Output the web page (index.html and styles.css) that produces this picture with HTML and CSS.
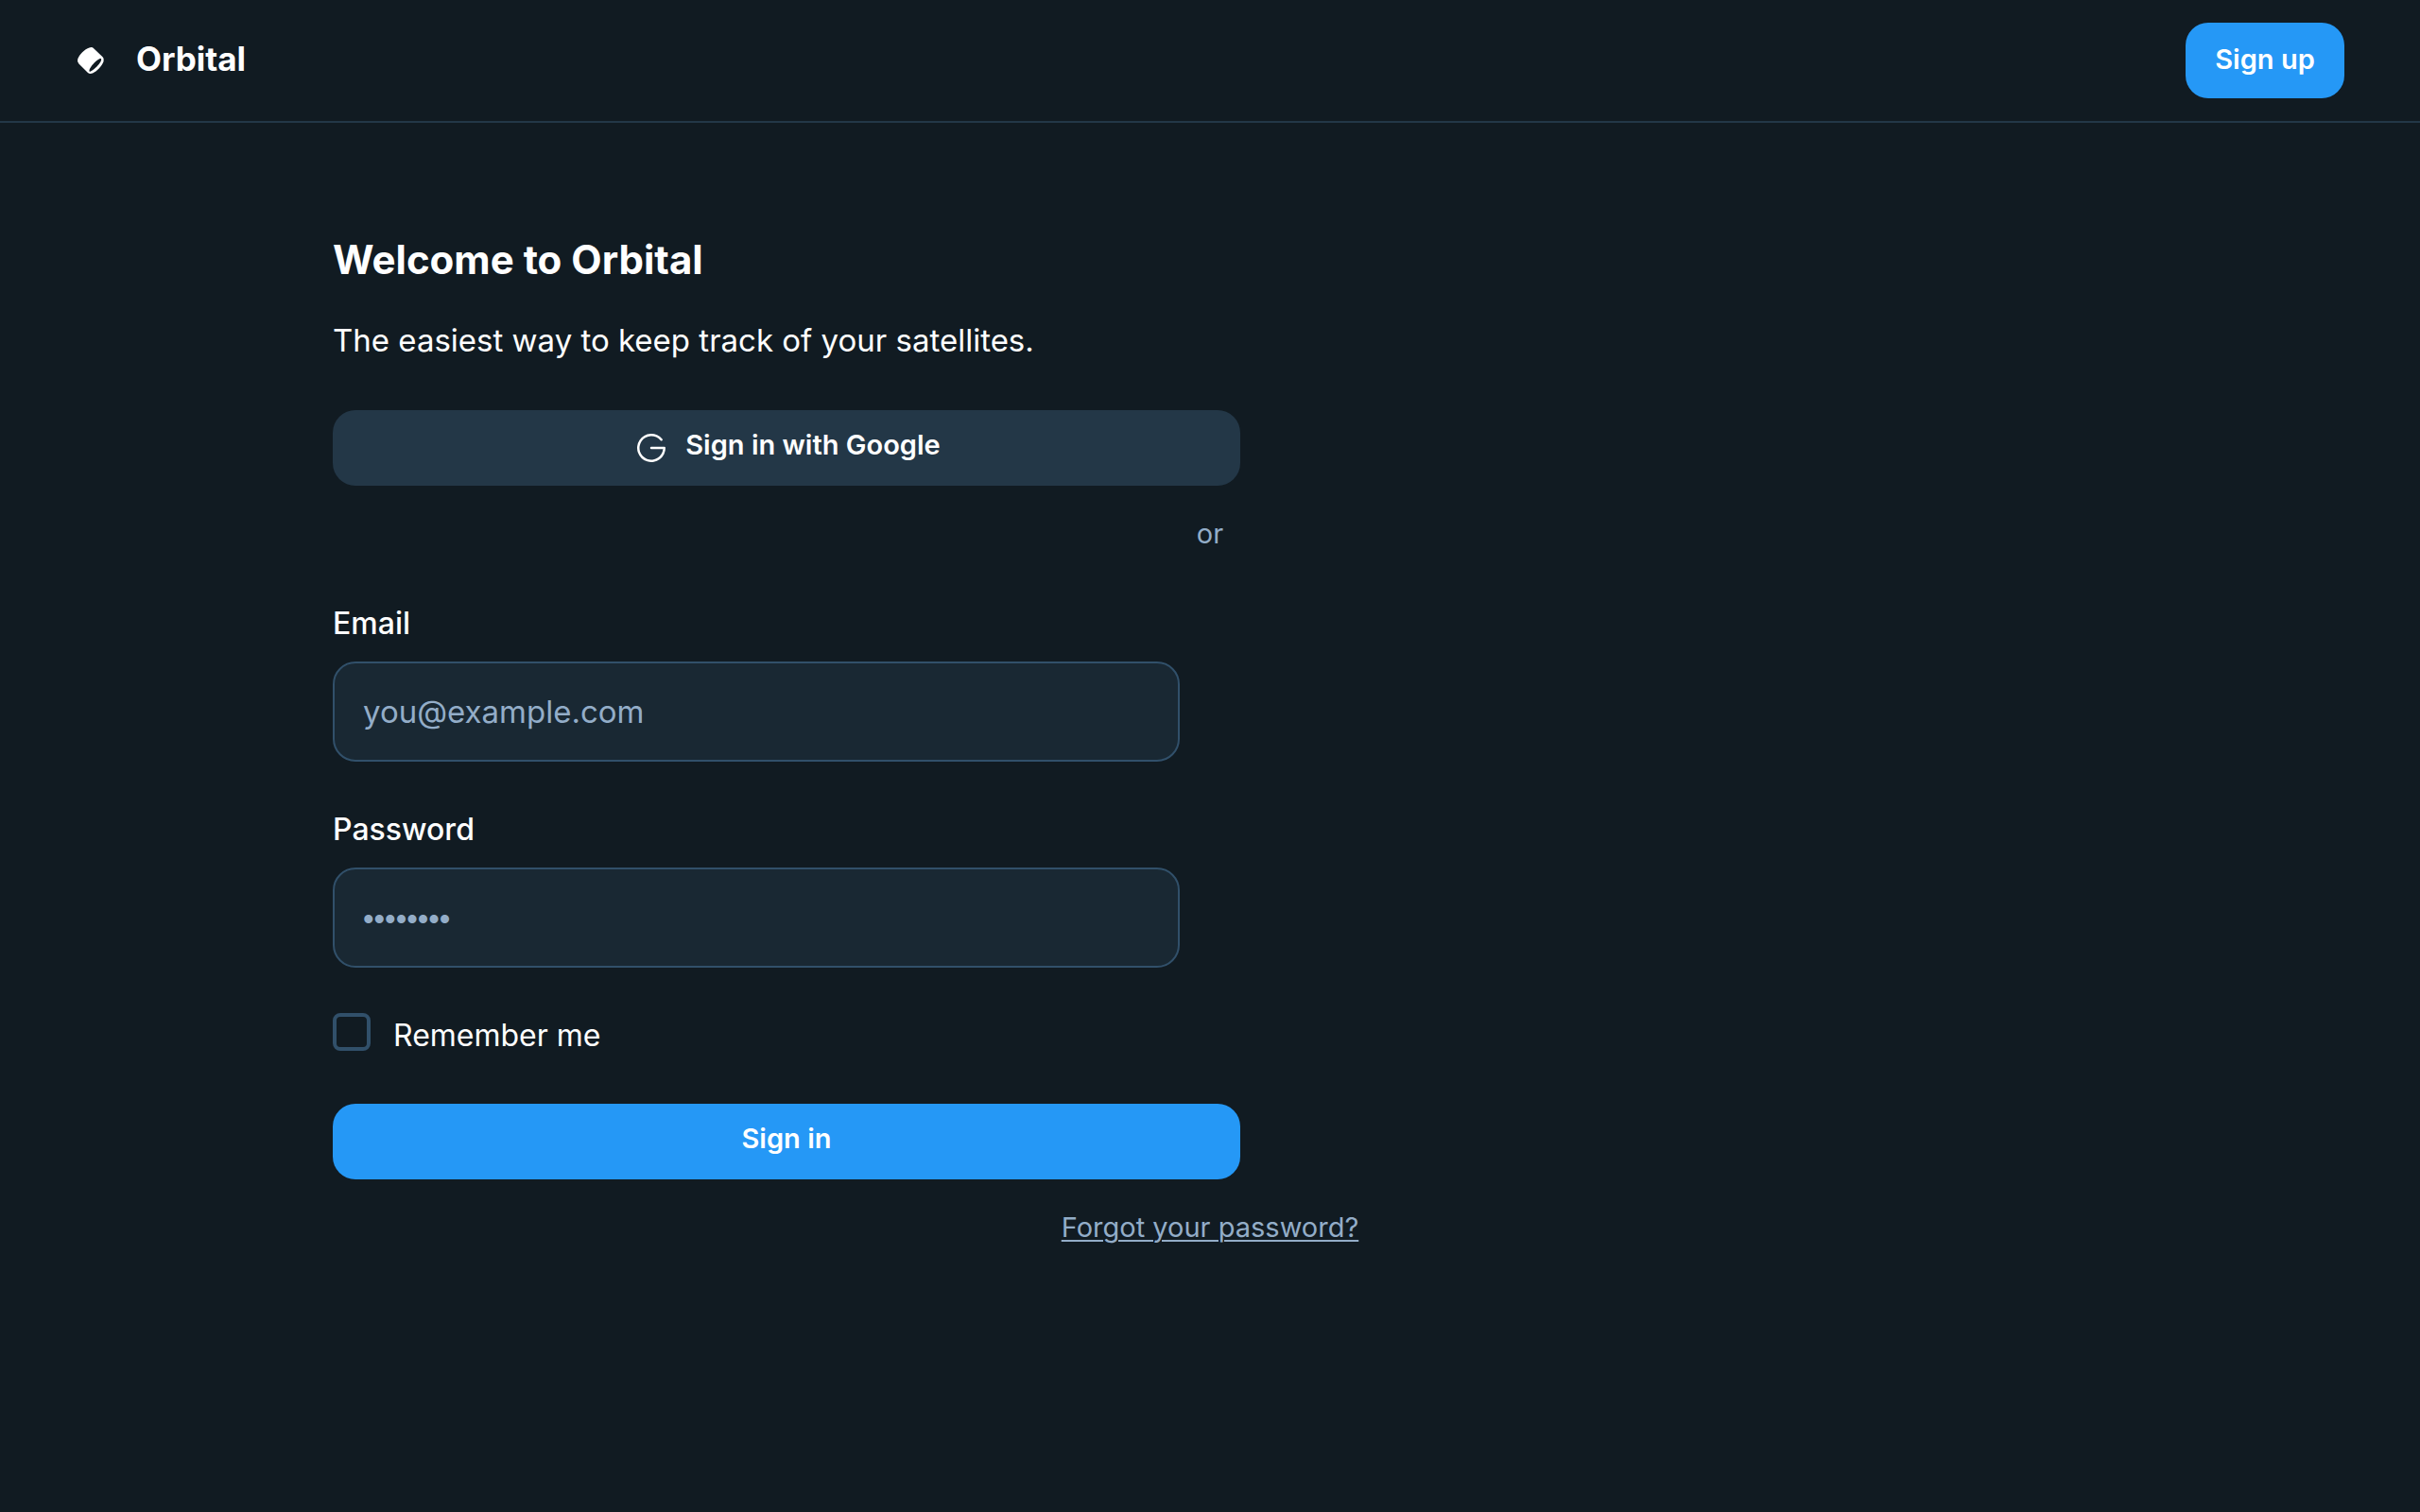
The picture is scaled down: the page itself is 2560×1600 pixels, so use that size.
FILE: index.html
```html
<!DOCTYPE html>
<html lang="en">
<head>
<meta charset="utf-8">
<title>Orbital</title>
<link rel="stylesheet" href="styles.css">
</head>
<body>
<header class="topbar">
  <div class="brand">
    <svg class="brand-mark" viewBox="0 0 32 32" aria-hidden="true"><path fill="#fff" fill-rule="evenodd" d="M2.200 14.600C4 9.500 9.500 4 14.500 2.400Q17.400 1.300 19.400 3.400L28.600 12.300Q30.600 14.200 29.600 17C27.500 22.500 22.500 27.500 18 29.500Q14.800 30.800 12.700 28.700L3.400 19.500Q1.300 17.400 2.200 14.600ZM14.700 27.700C17.500 28.300 28.600 17.500 27 14.200C24.500 12.500 13 24.500 14.700 27.700Z"/></svg>
    <h2 class="brand-name">Orbital</h2>
  </div>
  <button class="btn btn-primary btn-small" type="button">Sign up</button>
</header>
<main class="page">
  <h1 class="title">Welcome to Orbital</h1>
  <p class="lead">The easiest way to keep track of your satellites.</p>
  <form class="form">
    <button class="btn btn-secondary btn-wide" type="button">
      <svg class="google" viewBox="0 0 256 256" aria-hidden="true"><path fill="currentColor" d="M224,128a96,96,0,1,1-21.950-61.090,8,8,0,1,1-12.330,10.180A80,80,0,1,0,207.600,136H128a8,8,0,0,1,0-16h88A8,8,0,0,1,224,128Z"/></svg>
      <span>Sign in with Google</span>
    </button>
    <p class="note">or</p>
    <div class="field">
      <label class="label" for="email">Email</label>
      <input class="input" id="email" type="email" placeholder="you@example.com">
    </div>
    <div class="field">
      <label class="label" for="password">Password</label>
      <input class="input input-password" id="password" type="password" placeholder="••••••••">
    </div>
    <div class="remember">
      <input class="check" id="remember" type="checkbox">
      <label class="remember-label" for="remember">Remember me</label>
    </div>
    <button class="btn btn-primary btn-wide" type="submit">Sign in</button>
    <p class="note"><a class="link" href="#">Forgot your password?</a></p>
  </form>
</main>
</body>
</html>
```
FILE: styles.css
```css
* { box-sizing: border-box; }
body {
  margin: 0;
  background: #111b22;
  color: #fff;
  font-family: Inter, "Noto Sans", sans-serif;
  font-size: 32px;
  line-height: 48px;
}
h1, h2, p { margin: 0; }

.topbar {
  display: flex;
  align-items: center;
  justify-content: space-between;
  padding: 24px 80px;
  border-bottom: 2px solid #233747;
}
.brand { display: flex; align-items: center; gap: 32px; }
.brand-mark { width: 32px; height: 32px; }
.brand-name { font-size: 35px; line-height: 48px; font-weight: 700; padding-bottom: 4px; }

.btn {
  display: flex;
  align-items: center;
  justify-content: center;
  gap: 16px;
  height: 80px;
  padding: 0 32px 6px;
  border: 0;
  border-radius: 24px;
  color: #fff;
  font: 600 29px/44px Inter, "Noto Sans", sans-serif;
  cursor: pointer;
}
.btn-small { min-width: 168px; padding: 0 24px 2px; }
.btn-primary { background: #2598f6; }
.btn-secondary { background: #233747; }
.btn-wide { width: 100%; max-width: 960px; }
.google { width: 40px; height: 40px; margin-top: 6px; }

.page { max-width: 1920px; margin: 0 auto; padding: 110px 32px 80px; }
.title { font-size: 42px; line-height: 70px; font-weight: 700; }
.lead { padding: 26px 0 50px; font-size: 33px; }
.note {
  padding: 29px 0 35px;
  color: #93adc8;
  font-size: 29px;
  line-height: 44px;
  text-align: center;
}
.link {
  color: inherit;
  text-decoration-thickness: 2px;
  text-underline-offset: 3px;
}

.field { display: flex; flex-direction: column; max-width: 896px; padding: 14px 0 34px; }
.label { font-weight: 500; padding-bottom: 16px; }
.input {
  width: 100%;
  height: 106px;
  padding: 0 30px;
  border: 2px solid #31506a;
  border-radius: 24px;
  background: #192833;
  color: #fff;
  font: inherit;
  font-size: 33px;
}
.input-password { padding-top: 4px; font-family: "Liberation Sans", sans-serif; }
.input::placeholder { color: #93adc8; opacity: 1; }

.remember { display: flex; align-items: flex-start; gap: 24px; padding: 14px 0 48px; }
.check {
  appearance: none;
  width: 40px;
  height: 40px;
  margin: 0;
  border: 4px solid #31506a;
  border-radius: 8px;
}
.check:checked { background: #2598f6; }
.remember-label { line-height: 48px; }
```
